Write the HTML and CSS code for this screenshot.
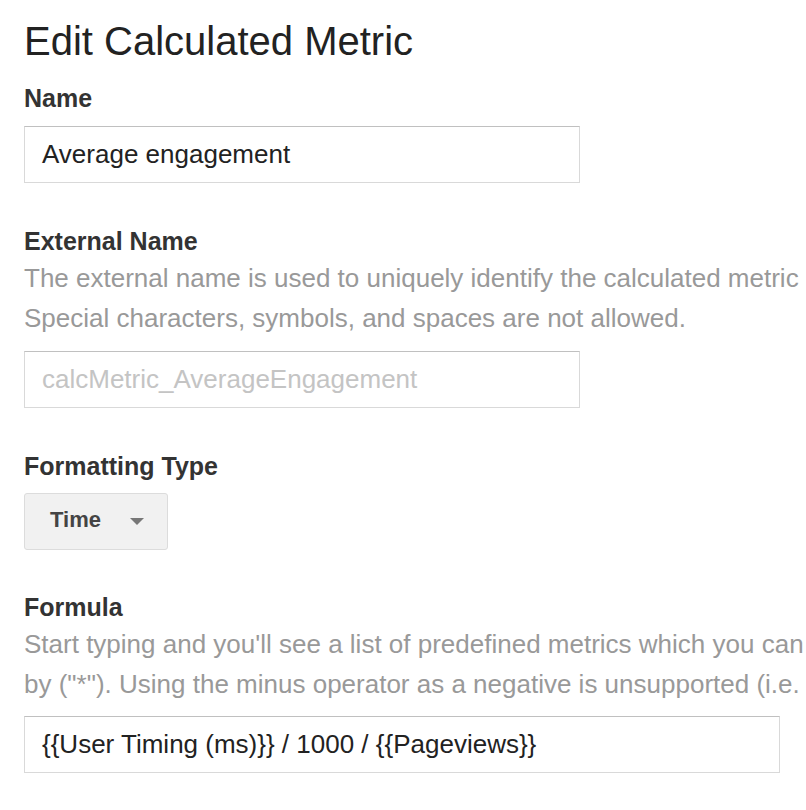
FILE: index.html
```html
<!DOCTYPE html>
<html lang="en">
<head>
<meta charset="utf-8">
<title>Edit Calculated Metric</title>
<link rel="stylesheet" href="styles.css">
</head>
<body>
<main class="page">
  <h1 class="title">Edit Calculated Metric</h1>

  <section class="field">
    <label class="label">Name</label>
    <div class="input input-short">Average engagement</div>
  </section>

  <section class="field">
    <label class="label">External Name</label>
    <p class="help">The external name is used to uniquely identify the calculated metric<br>Special characters, symbols, and spaces are not allowed.</p>
    <div class="input input-short placeholder">calcMetric_AverageEngagement</div>
  </section>

  <section class="field field-select">
    <label class="label">Formatting Type</label>
    <div class="select">
      <span class="select-text">Time</span>
      <span class="caret"></span>
    </div>
  </section>

  <section class="field field-formula">
    <label class="label">Formula</label>
    <p class="help">Start typing and you'll see a list of predefined metrics which you can<br>by ("*"). Using the minus operator as a negative is unsupported (i.e.</p>
    <div class="input input-long">{{User Timing (ms)}} / 1000 / {{Pageviews}}</div>
  </section>
</main>
</body>
</html>
```

FILE: styles.css
```css
html, body {
  margin: 0;
  padding: 0;
  overflow: hidden;
  background: #fff;
}

body {
  font-family: "Liberation Sans", Arial, Helvetica, sans-serif;
  color: #222;
}

.page {
  padding: 17px 0 0 24px;
  white-space: nowrap;
}

.title {
  margin: 0;
  font-size: 40px;
  line-height: 48px;
  font-weight: 400;
  color: #222;
}

.field {
  display: flex;
  flex-direction: column;
  align-items: flex-start;
  margin-top: 43px;
}

.field:first-of-type {
  margin-top: 18px;
}

.label {
  display: block;
  font-size: 25px;
  line-height: 30px;
  font-weight: 700;
  color: #333;
}

.help {
  margin: 2px 0 0;
  font-size: 26px;
  line-height: 40px;
  color: #999;
}

.input {
  box-sizing: border-box;
  height: 57px;
  margin-top: 13px;
  padding: 0 17px;
  display: flex;
  align-items: center;
  font-size: 26px;
  color: #222;
  background: #fff;
  border: 1px solid #d9d9d9;
  border-top-color: #c0c0c0;
}

.input-short {
  width: 556px;
}

.input-long {
  width: 756px;
}

.field-formula {
  margin-top: 42px;
}

.field-formula .input {
  margin-top: 12px;
}

.placeholder {
  color: #c4c4c4;
}

.select {
  box-sizing: border-box;
  width: 144px;
  height: 57px;
  margin-top: 12px;
  padding: 0 0 4px 25px;
  display: flex;
  align-items: center;
  background: #f1f1f1;
  border: 1px solid #dcdcdc;
  border-radius: 3px;
}

.select-text {
  font-size: 22px;
  font-weight: 700;
  color: #444;
  width: 80px;
}

.caret {
  width: 0;
  height: 0;
  border-left: 7px solid transparent;
  border-right: 7px solid transparent;
  border-top: 7px solid #777;
  margin-top: 4px;
}
```
